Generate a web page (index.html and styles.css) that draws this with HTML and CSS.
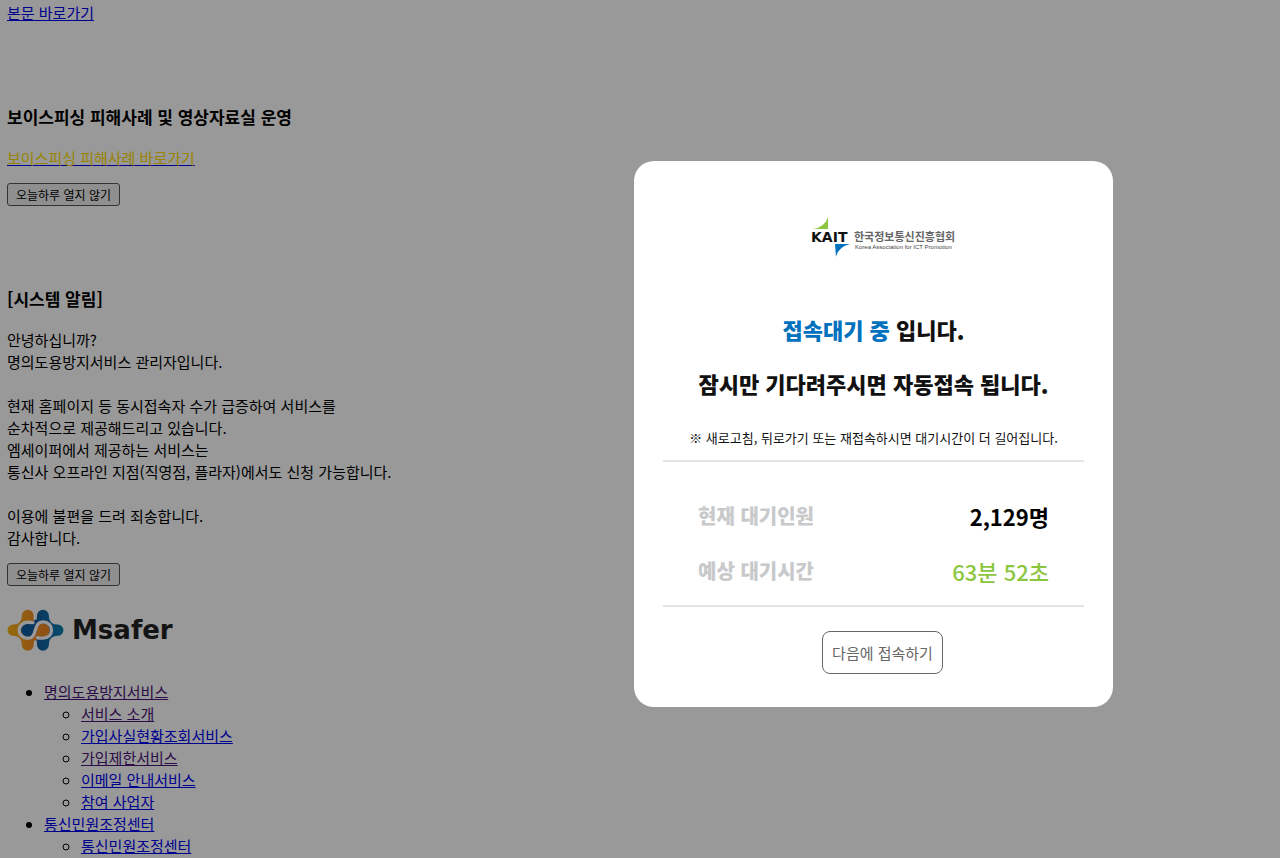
FILE: index.html
```html
<!DOCTYPE html>
<html lang="ko">
<head>
    <meta charset="UTF-8">
    <meta name="viewport" content="width=device-width, initial-scale=1.0">
    <title>명의도용방지서비스 Msafer</title>
    <link rel="stylesheet" href="styles.css">
</head>
<body>
    <a href="#gnb">본문 바로가기</a>

    <div class="popup">
        <h3>보이스피싱 피해사례 및 영상자료실 운영</h3>
        <p><a href="#case"><span class="highlight">보이스피싱 피해사례 바로가기</span></a></p>
        <button type="button" class="btn-today">오늘하루 열지 않기</button>
    </div>

    <div class="popup">
        <h3>[시스템 알림]</h3>
        <p>
            안녕하십니까?<br>
            명의도용방지서비스 관리자입니다.<br>
            <br>
            현재 홈페이지 등 동시접속자 수가 급증하여 서비스를<br>
            순차적으로 제공해드리고 있습니다.<br>
            엠세이퍼에서 제공하는 서비스는<br>
            통신사 오프라인 지점(직영점, 플라자)에서도 신청 가능합니다.<br>
            <br>
            이용에 불편을 드려 죄송합니다.<br>
            감사합니다.
        </p>
        <button type="button" class="btn-today">오늘하루 열지 않기</button>
    </div>

    <h1 class="logo">
        <svg class="logo-mark" viewBox="22 26 171 127" aria-hidden="true">
            <defs>
                <linearGradient id="orange" x1="0" x2="1">
                    <stop offset="0" stop-color="#f9b216"/>
                    <stop offset="1" stop-color="#f08a24"/>
                </linearGradient>
                <linearGradient id="blue" x1="0" x2="1">
                    <stop offset="0" stop-color="#125c9e"/>
                    <stop offset="1" stop-color="#0c7fb0"/>
                </linearGradient>
            </defs>
            <path fill="url(#orange)" d="M107 66Q99 58 102 46A18 18 0 1 0 66 46Q66 62 57 68Q51 73 40 73A17 17 0 1 0 40 107Q51 107 57 112Q66 118 66 134A18 18 0 1 0 102 134Q101 122 107 114Z"/>
            <path fill="url(#blue)" d="M107 66Q113 58 112 46A18 18 0 1 1 148 46Q148 62 157 68Q163 73 175 73A17 17 0 1 1 175 107Q163 107 157 112Q148 118 148 134A18 18 0 1 1 112 134Q113 122 107 114Z"/>
            <circle cx="84" cy="90" r="20" fill="#125c9e"/>
            <circle cx="130" cy="90" r="20" fill="#f08a24"/>
            <path stroke="#125c9e" stroke-width="18" d="M86 86L114 64"/>
            <path stroke="#f08a24" stroke-width="18" d="M128 94L100 116"/>
            <path fill="none" stroke="#fff" stroke-width="10" stroke-linecap="round" d="M100 67C96 66 90 66 84 66C68 66 58 78 58 90C58 104 70 115 84 115C101 115 103 101 107 90C111 79 113 65 130 65C145 65 156 76 156 90C156 103 146 114 130 114C124 114 118 114 114 113"/>
        </svg>
        <span class="logo-text">Msafer</span>
    </h1>

    <ul class="gnb" id="gnb">
        <li><a href="#" class="visited">명의도용방지서비스</a>
            <ul>
                <li><a href="#" class="visited">서비스 소개</a></li>
                <li><a href="#">가입사실현황조회서비스</a></li>
                <li><a href="#" class="visited">가입제한서비스</a></li>
                <li><a href="#">이메일 안내서비스</a></li>
                <li><a href="#">참여 사업자</a></li>
            </ul>
        </li>
        <li><a href="#">통신민원조정센터</a>
            <ul>
                <li><a href="#">통신민원조정센터</a></li>
            </ul>
        </li>
    </ul>

    <div class="overlay">
        <div class="modal" role="dialog" aria-labelledby="waitTitle">
            <svg class="kait" viewBox="0 0 144 41" role="img" aria-label="KAIT 한국정보통신진흥협회">
                <path fill="#8cc63f" d="M17 0V12H2Q14 10 17 0Z"/>
                <path fill="#0071bc" d="M24 27H39Q27 30 25 40Z"/>
                <text class="kait-name" x="0" y="25">KAIT</text>
                <text class="kait-ko" x="43" y="24">한국정보통신진흥협회</text>
                <text class="kait-en" x="44" y="32">Korea Association for ICT Promotion</text>
            </svg>

            <h2 class="wait-title" id="waitTitle"><strong>접속대기 중</strong> 입니다.</h2>
            <p class="wait-title">잠시만 기다려주시면 자동접속 됩니다.</p>
            <p class="wait-note">※ 새로고침, 뒤로가기 또는 재접속하시면 대기시간이 더 길어집니다.</p>

            <dl class="wait-info">
                <div class="wait-row">
                    <dt>현재 대기인원</dt>
                    <dd>2,129명</dd>
                </div>
                <div class="wait-row">
                    <dt>예상 대기시간</dt>
                    <dd class="time">63분 52초</dd>
                </div>
            </dl>

            <button type="button" class="btn-later">다음에 접속하기</button>
        </div>
    </div>
</body>
</html>
```
FILE: styles.css
```css
body {
    margin: 2px 7px 0;
    font-family: "Noto Sans CJK KR", sans-serif;
    font-size: 15px;
    line-height: 22px;
    color: #000;
    background: #fff;
}

a {
    color: #0000ee;
}

a.visited {
    color: #4a1478;
}

/* notice popups */
.popup {
    margin-top: 80px;
}

.popup h3 {
    margin: 0 0 18px;
    font-size: 17px;
    line-height: 25px;
}

.popup p {
    margin: 0 0 14px;
}

.highlight {
    color: #fd0;
}

.btn-today {
    display: block;
    height: 23px;
    padding: 0 8px;
    border: 1px solid #555;
    border-radius: 3px;
    font-family: inherit;
    font-size: 12px;
    line-height: 20px;
    color: #000;
    background: #efefef;
}

/* site logo */
.logo {
    display: flex;
    align-items: center;
    gap: 8px;
    margin: 23px 0 30px;
}

.logo-mark {
    width: 57px;
    height: 42px;
}

.logo-text {
    font-family: "DejaVu Sans", sans-serif;
    font-size: 26px;
    line-height: 42px;
    color: #222;
}

/* menu */
.gnb,
.gnb ul {
    margin: 0;
    padding-left: 37px;
}

/* waiting layer */
.overlay {
    position: fixed;
    inset: 0;
    display: flex;
    align-items: center;
    justify-content: center;
    padding: 10px 0 0 467px;
    background: rgba(0, 0, 0, 0.4);
}

.modal {
    display: flex;
    flex-direction: column;
    align-items: center;
    box-sizing: border-box;
    width: 479px;
    padding: 56px 29px 33px;
    border-radius: 20px;
    background: #fff;
}

.kait {
    width: 144px;
    height: 41px;
    margin: 0 0 55px 18px;
    overflow: visible;
}

.kait-name {
    font: bold 14px "DejaVu Sans", sans-serif;
    fill: #111;
}

.kait-ko {
    font: bold 11px "Noto Sans CJK KR", sans-serif;
    fill: #666;
}

.kait-en {
    font: 6px "Liberation Sans", sans-serif;
    fill: #444;
}

.wait-title {
    margin: 0 0 22px;
    font-size: 22px;
    font-weight: 900;
    line-height: 32px;
    color: #111;
}

.wait-title strong {
    color: #0071bc;
}

.wait-note {
    margin: 7px 0 12px;
    font-size: 13px;
    line-height: 20px;
    color: #111;
}

.wait-info {
    display: flex;
    flex-direction: column;
    gap: 23px;
    align-self: stretch;
    margin: 0 0 24px;
    padding: 38px 35px 18px;
    border-top: 2px solid #e5e5e5;
    border-bottom: 2px solid #e5e5e5;
}

.wait-row {
    display: flex;
    align-items: center;
    justify-content: space-between;
    line-height: 32px;
}

.wait-row dt {
    font-size: 20px;
    font-weight: 900;
    color: #c8c9ca;
}

.wait-row dd {
    margin: 0;
    font-size: 22px;
    font-weight: 700;
    color: #000;
}

.wait-row .time {
    font-weight: 500;
    color: #8cc63f;
}

.btn-later {
    height: 43px;
    margin-left: 18px;
    padding: 0 9px;
    border: 1px solid #666;
    border-radius: 8px;
    font-family: inherit;
    font-size: 15px;
    color: #666;
    background: #fff;
}
```
